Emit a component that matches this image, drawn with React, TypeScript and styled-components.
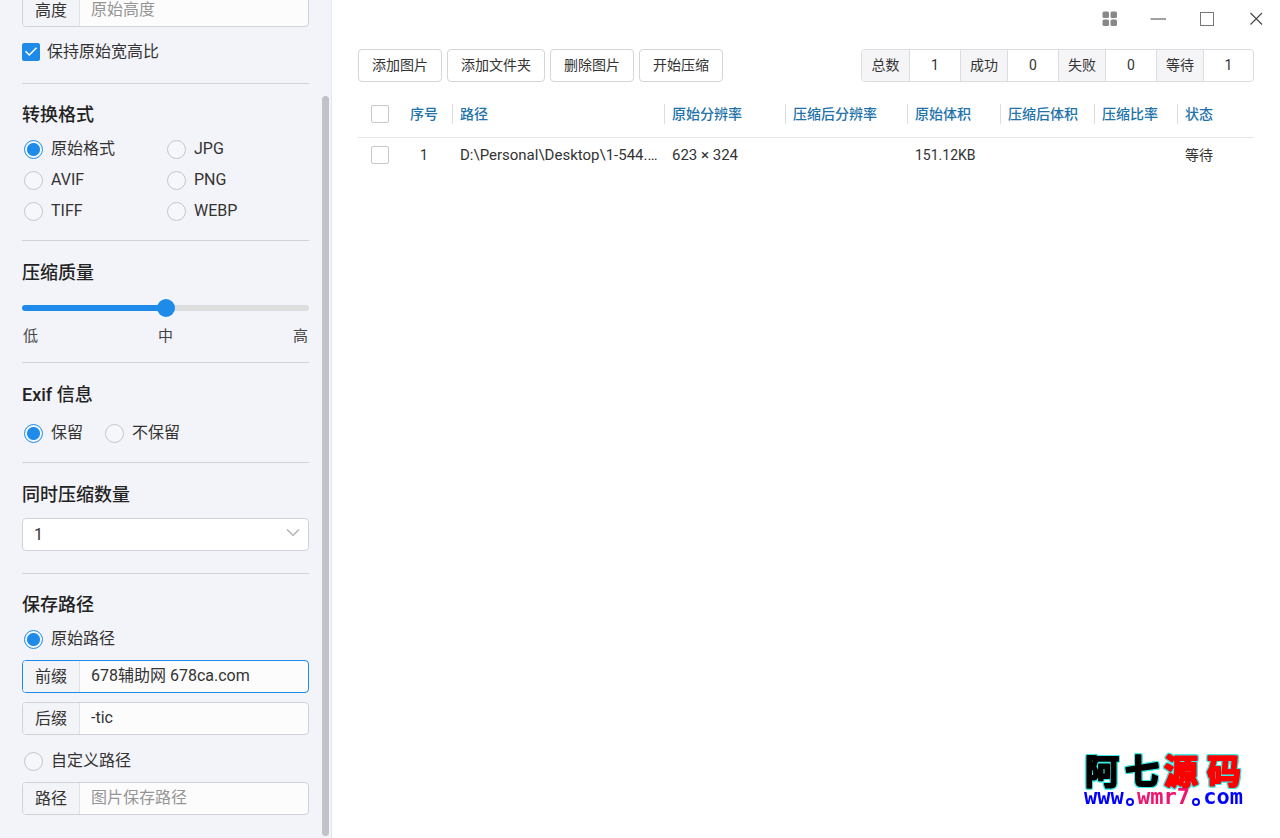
import React, { useState } from "react";
import styled, { createGlobalStyle } from "styled-components";

const blue = "#1e8beb";
const line = "#cfd2d8";
const family = `Roboto, "Noto Sans CJK SC", sans-serif`;

const GlobalStyle = createGlobalStyle`
  *, *::before, *::after { box-sizing: border-box; }
  body { margin: 0; background: #fff; color: #333; font: 16px/24px ${family}; }
  button, input, select { font: inherit; color: inherit; margin: 0; }
`;

const Window = styled.div`
  display: flex;
  height: 100vh;
  overflow: hidden;
`;

/* The settings column rests at the end of its scroll range. */
const Sidebar = styled.aside`
  position: relative;
  flex: 0 0 332px;
  display: flex;
  flex-direction: column;
  justify-content: flex-end;
  padding: 0 22px 23px;
  background: #f3f4f9;
  border-right: 1px solid #e6e7eb;
  overflow: hidden;
`;

const ScrollThumb = styled.div`
  position: absolute;
  top: 96px;
  right: 2px;
  bottom: 2px;
  width: 7px;
  border-radius: 4px;
  background: #c1c3c8;
`;

const Section = styled.section<{ $top?: number; $bottom?: number }>`
  flex: none;
  padding: ${(p) => p.$top ?? 20}px 0 ${(p) => p.$bottom ?? 0}px;
  border-bottom: ${(p) => (p.$bottom ? `1px solid ${line}` : "none")};
`;

const Title = styled.h2<{ $gap: number }>`
  margin: 0 0 ${(p) => p.$gap}px;
  font-size: 18px;
  line-height: 24px;
  font-weight: 500;
  color: #222;
`;

const Choice = styled.label<{ $after?: number }>`
  display: flex;
  flex: none;
  align-items: center;
  height: 24px;
  gap: 8px;
  margin-bottom: ${(p) => p.$after ?? 0}px;
  padding-left: 2px;
`;

const Radio = styled.input.attrs({ type: "radio" })`
  appearance: none;
  flex: none;
  width: 19px;
  height: 19px;
  border: 1px solid #c4c6ca;
  border-radius: 50%;
  background: #f6f7fa;
  &:checked {
    border-color: ${blue};
    background: radial-gradient(circle, ${blue} 6px, #f6f7fa 7px);
  }
`;

const CheckChoice = styled(Choice)`
  gap: 7px;
  padding-left: 0;
`;

const Check = styled.input.attrs({ type: "checkbox" })`
  appearance: none;
  display: block;
  flex: none;
  width: 18px;
  height: 18px;
  border: 1px solid #c6c8cc;
  border-radius: 2px;
  background: #fff;
`;

const CheckBox = styled.span`
  position: relative;
  display: block;
  input:checked { background: ${blue}; border-color: ${blue}; }
  svg { position: absolute; inset: 0; pointer-events: none; }
`;

const ChoiceGrid = styled.div`
  display: grid;
  grid-template-columns: 143px 1fr;
  row-gap: 7px;
`;

const ChoiceRow = styled.div`
  display: flex;
  gap: 20px;
`;

const Field = styled.label<{ $active?: boolean; $after?: number }>`
  flex: none;
  display: flex;
  height: 33px;
  margin-bottom: ${(p) => p.$after ?? 0}px;
  border: 1px solid ${(p) => (p.$active ? blue : line)};
  border-radius: 4px;
  background: #fcfcfd;
  overflow: hidden;
`;

const FieldName = styled.span`
  flex: 0 0 57px;
  background: #f3f4f8;
  border-right: 1px solid #e0e2e6;
  line-height: 31px;
  text-align: center;
`;

const FieldInput = styled.input`
  flex: 1;
  min-width: 0;
  padding: 0 11px 2px;
  border: 0;
  outline: 0;
  background: transparent;
  &::placeholder { color: #959595; opacity: 1; }
`;

const Slider = styled.input.attrs({ type: "range" })`
  appearance: none;
  display: block;
  width: 100%;
  height: 20px;
  background: transparent;
  &::-webkit-slider-runnable-track {
    height: 6px;
    border-radius: 3px;
    background: linear-gradient(to right, ${blue} 50%, #dcdddd 50%);
  }
  &::-webkit-slider-thumb {
    appearance: none;
    width: 18px;
    height: 18px;
    margin-top: -6px;
    border-radius: 50%;
    background: ${blue};
  }
`;

const Scale = styled.div`
  display: flex;
  justify-content: space-between;
  margin-top: 6px;
  padding: 0 1px;
  font-size: 15px;
  color: #444;
`;

const SelectWrap = styled.div`
  position: relative;
  svg { position: absolute; right: 9px; top: 10px; pointer-events: none; }
`;

const Select = styled.select`
  appearance: none;
  display: block;
  width: 100%;
  height: 33px;
  padding: 0 11px;
  border: 1px solid ${line};
  border-radius: 4px;
  background: #fff;
`;

const Main = styled.main`
  flex: 1;
  min-width: 0;
  display: flex;
  flex-direction: column;
  background: #fff;
  font-size: 14px;
`;

const Controls = styled.div`
  display: flex;
  justify-content: flex-end;
  height: 49px;
`;

const ControlButton = styled.button`
  width: 49px;
  height: 37px;
  padding: 0;
  border: 0;
  background: none;
  display: grid;
  place-items: center;
`;

const Content = styled.div`
  padding: 0 26px;
`;

const Toolbar = styled.div`
  display: flex;
  gap: 5px;
  margin-bottom: 9px;
`;

const ToolButton = styled.button`
  height: 33px;
  padding: 0 13px;
  border: 1px solid #d5d6d8;
  border-radius: 4px;
  background: #fff;
  line-height: 31px;
  white-space: nowrap;
`;

const Stats = styled.dl`
  display: flex;
  margin: 0 0 0 auto;
  height: 33px;
  border: 1px solid #dcdde0;
  border-radius: 4px;
  overflow: hidden;
  line-height: 31px;
  text-align: center;
`;

const StatName = styled.dt`
  width: 48px;
  background: #f5f5f8;
  border-right: 1px solid #dcdde0;
`;

const StatValue = styled.dd`
  width: 50px;
  margin: 0;
  & + dt { border-left: 1px solid #dcdde0; }
  &:last-child { width: 49px; }
`;

const Table = styled.table`
  width: 100%;
  table-layout: fixed;
  border-collapse: collapse;
  line-height: 20px;
`;

const Col = styled.col<{ $w?: number }>`
  width: ${(p) => (p.$w ? `${p.$w}px` : "auto")};
`;

const HeadCell = styled.th<{ $rule?: boolean }>`
  height: 46px;
  padding: 0;
  border-bottom: 1px solid #e6e6e8;
  font-weight: 500;
  color: #2272aa;
  text-align: left;
  white-space: nowrap;
  span {
    display: block;
    padding-left: 7px;
    border-left: 1px solid ${(p) => (p.$rule ? "#dcdee0" : "transparent")};
  }
`;

const Cell = styled.td<{ $large?: boolean }>`
  height: 35px;
  padding: 0 0 0 8px;
  font-size: ${(p) => (p.$large ? 15 : 14)}px;
  white-space: nowrap;
`;

const BoxCell = styled.td`
  padding: 0 0 0 13px;
`;

const BoxHead = styled(HeadCell)`
  padding: 0 0 0 13px;
`;

const NumberHead = styled(HeadCell)`
  text-align: center;
`;

const NumberCell = styled(Cell)`
  padding: 0;
  text-align: center;
`;

/* The brand mark floats over the corner of the window. */
const Brand = styled.svg`
  position: fixed;
  right: 34px;
  bottom: 22px;
  overflow: visible;
`;

const BrandName = styled.g`
  font: 700 34px "Noto Sans CJK SC", sans-serif;
  text-anchor: middle;
  stroke-width: 2px;
  stroke-linejoin: round;
  filter: drop-shadow(1px 0 0 #3fe8e4) drop-shadow(-1px 0 0 #3fe8e4)
    drop-shadow(0 1px 0 #3fe8e4) drop-shadow(0 -1px 0 #3fe8e4);
`;

const BrandUrl = styled.text`
  font: normal 700 22px "DejaVu Sans Mono", monospace;
  fill: #00f;
`;

const formats = ["原始格式", "JPG", "AVIF", "PNG", "TIFF", "WEBP"];
const stats: [string, number][] = [["总数", 1], ["成功", 0], ["失败", 0], ["等待", 1]];
const columns = ["路径", "原始分辨率", "压缩后分辨率", "原始体积", "压缩后体积", "压缩比率", "状态"];
const widths = [38, 56, undefined, 121, 122, 93, 94, 83, 77];
const row = ["D:\\Personal\\Desktop\\1-544.…", "623 × 324", "", "151.12KB", "", "", "等待"];

export default function App() {
  const [format, setFormat] = useState("原始格式");
  const [exif, setExif] = useState("保留");
  const [target, setTarget] = useState("原始路径");
  const [keep, setKeep] = useState(true);

  return (
    <Window>
      <GlobalStyle />
      <Sidebar>
        <Field $after={13}>
          <FieldName>高度</FieldName>
          <FieldInput placeholder="原始高度" />
        </Field>
        <Section as="div" $top={0} $bottom={19}>
          <CheckChoice>
            <CheckBox>
              <Check checked={keep} onChange={() => setKeep(!keep)} />
              {keep && (
                <svg width="18" height="18" viewBox="0 0 18 18" fill="none" stroke="#fff" strokeWidth="1.5">
                  <path d="M3.5 8.2 7.3 12 14.5 4.8" />
                </svg>
              )}
            </CheckBox>
            保持原始宽高比
          </CheckChoice>
        </Section>
        <Section $top={19} $bottom={17}>
          <Title $gap={10}>转换格式</Title>
          <ChoiceGrid>
            {formats.map((f) => (
              <Choice key={f}>
                <Radio name="format" checked={format === f} onChange={() => setFormat(f)} />
                {f}
              </Choice>
            ))}
          </ChoiceGrid>
        </Section>
        <Section $bottom={14}>
          <Title $gap={13} id="quality">压缩质量</Title>
          <Slider aria-labelledby="quality" min={0} max={100} defaultValue={50} />
          <Scale><span>低</span><span>中</span><span>高</span></Scale>
        </Section>
        <Section $bottom={17}>
          <Title $gap={14}>Exif 信息</Title>
          <ChoiceRow>
            {["保留", "不保留"].map((e) => (
              <Choice key={e}>
                <Radio name="exif" checked={exif === e} onChange={() => setExif(e)} />
                {e}
              </Choice>
            ))}
          </ChoiceRow>
        </Section>
        <Section $bottom={22}>
          <Title $gap={11} id="threads">同时压缩数量</Title>
          <SelectWrap>
            <Select aria-labelledby="threads" defaultValue="1">
              <option>1</option>
              <option>2</option>
              <option>4</option>
            </Select>
            <svg width="14" height="10" viewBox="0 0 14 10" fill="none" stroke="#a9abaf" strokeWidth="1.2">
              <path d="M1 1.5 7 7.5 13 1.5" />
            </svg>
          </SelectWrap>
        </Section>
        <Section $top={19}>
          <Title $gap={10}>保存路径</Title>
          <Choice $after={9}>
            <Radio name="target" checked={target === "原始路径"} onChange={() => setTarget("原始路径")} />
            原始路径
          </Choice>
        </Section>
        <Field $active $after={9}>
          <FieldName>前缀</FieldName>
          <FieldInput defaultValue="678辅助网 678ca.com" />
        </Field>
        <Field $after={14}>
          <FieldName>后缀</FieldName>
          <FieldInput defaultValue="-tic" />
        </Field>
        <Choice $after={9}>
          <Radio name="target" checked={target === "自定义路径"} onChange={() => setTarget("自定义路径")} />
          自定义路径
        </Choice>
        <Field>
          <FieldName>路径</FieldName>
          <FieldInput placeholder="图片保存路径" />
        </Field>
        <ScrollThumb />
      </Sidebar>

      <Main>
        <Controls>
          <ControlButton aria-label="菜单">
            <svg width="16" height="16" viewBox="0 0 16 16" fill="#888">
              <rect x="1.5" y="0.5" width="6.5" height="6.5" rx="1.5" />
              <rect x="9.5" y="0.5" width="6.5" height="6.5" rx="1.5" />
              <rect x="1.5" y="8.5" width="6.5" height="6.5" rx="1.5" />
              <rect x="9.5" y="8.5" width="6.5" height="6.5" rx="1.5" />
            </svg>
          </ControlButton>
          <ControlButton aria-label="最小化">
            <svg width="16" height="16" viewBox="0 0 16 16" stroke="#777" strokeWidth="1.4">
              <path d="M0.5 8H16" />
            </svg>
          </ControlButton>
          <ControlButton aria-label="最大化">
            <svg width="16" height="16" viewBox="0 0 16 16" fill="none" stroke="#777">
              <rect x="1.5" y="1.5" width="13" height="13" />
            </svg>
          </ControlButton>
          <ControlButton aria-label="关闭">
            <svg width="16" height="16" viewBox="0 0 16 16" stroke="#444" strokeWidth="1.1">
              <path d="M2.5 2 14 13.5M14 2 2.5 13.5" />
            </svg>
          </ControlButton>
        </Controls>
        <Content>
          <Toolbar>
            {["添加图片", "添加文件夹", "删除图片", "开始压缩"].map((t) => (
              <ToolButton key={t}>{t}</ToolButton>
            ))}
            <Stats>
              {stats.map(([name, value]) => (
                <React.Fragment key={name}>
                  <StatName>{name}</StatName>
                  <StatValue>{value}</StatValue>
                </React.Fragment>
              ))}
            </Stats>
          </Toolbar>
          <Table>
            <colgroup>
              {widths.map((w, i) => <Col key={i} $w={w} />)}
            </colgroup>
            <thead>
              <tr>
                <BoxHead><Check aria-label="全选" /></BoxHead>
                <NumberHead>序号</NumberHead>
                {columns.map((c) => (
                  <HeadCell key={c} $rule><span>{c}</span></HeadCell>
                ))}
              </tr>
            </thead>
            <tbody>
              <tr>
                <BoxCell><Check aria-label="选择第 1 行" /></BoxCell>
                <NumberCell>1</NumberCell>
                {row.map((v, i) => <Cell key={i} $large={i < 2}>{v}</Cell>)}
              </tr>
            </tbody>
          </Table>
        </Content>
      </Main>

      <Brand width="164" height="74" viewBox="0 0 164 74" aria-label="阿七源码 www.wmr7.com">
        <BrandName>
          <text x="20" y="42" fill="#000" stroke="#000">阿</text>
          <text x="60" y="42" fill="#000" stroke="#000">七</text>
          <text x="99" y="42" fill="#f00" stroke="#f00">源</text>
          <text x="142" y="42" fill="#f00" stroke="#f00">码</text>
        </BrandName>
        <BrandUrl x="2" y="62">
          www.<tspan fill="#f0146e">wmr7</tspan>.com
        </BrandUrl>
        <g fill="#fff" stroke="#00f" strokeWidth="2">
          <circle cx="48" cy="60" r="3" />
          <circle cx="114" cy="60" r="3" />
        </g>
      </Brand>
    </Window>
  );
}
